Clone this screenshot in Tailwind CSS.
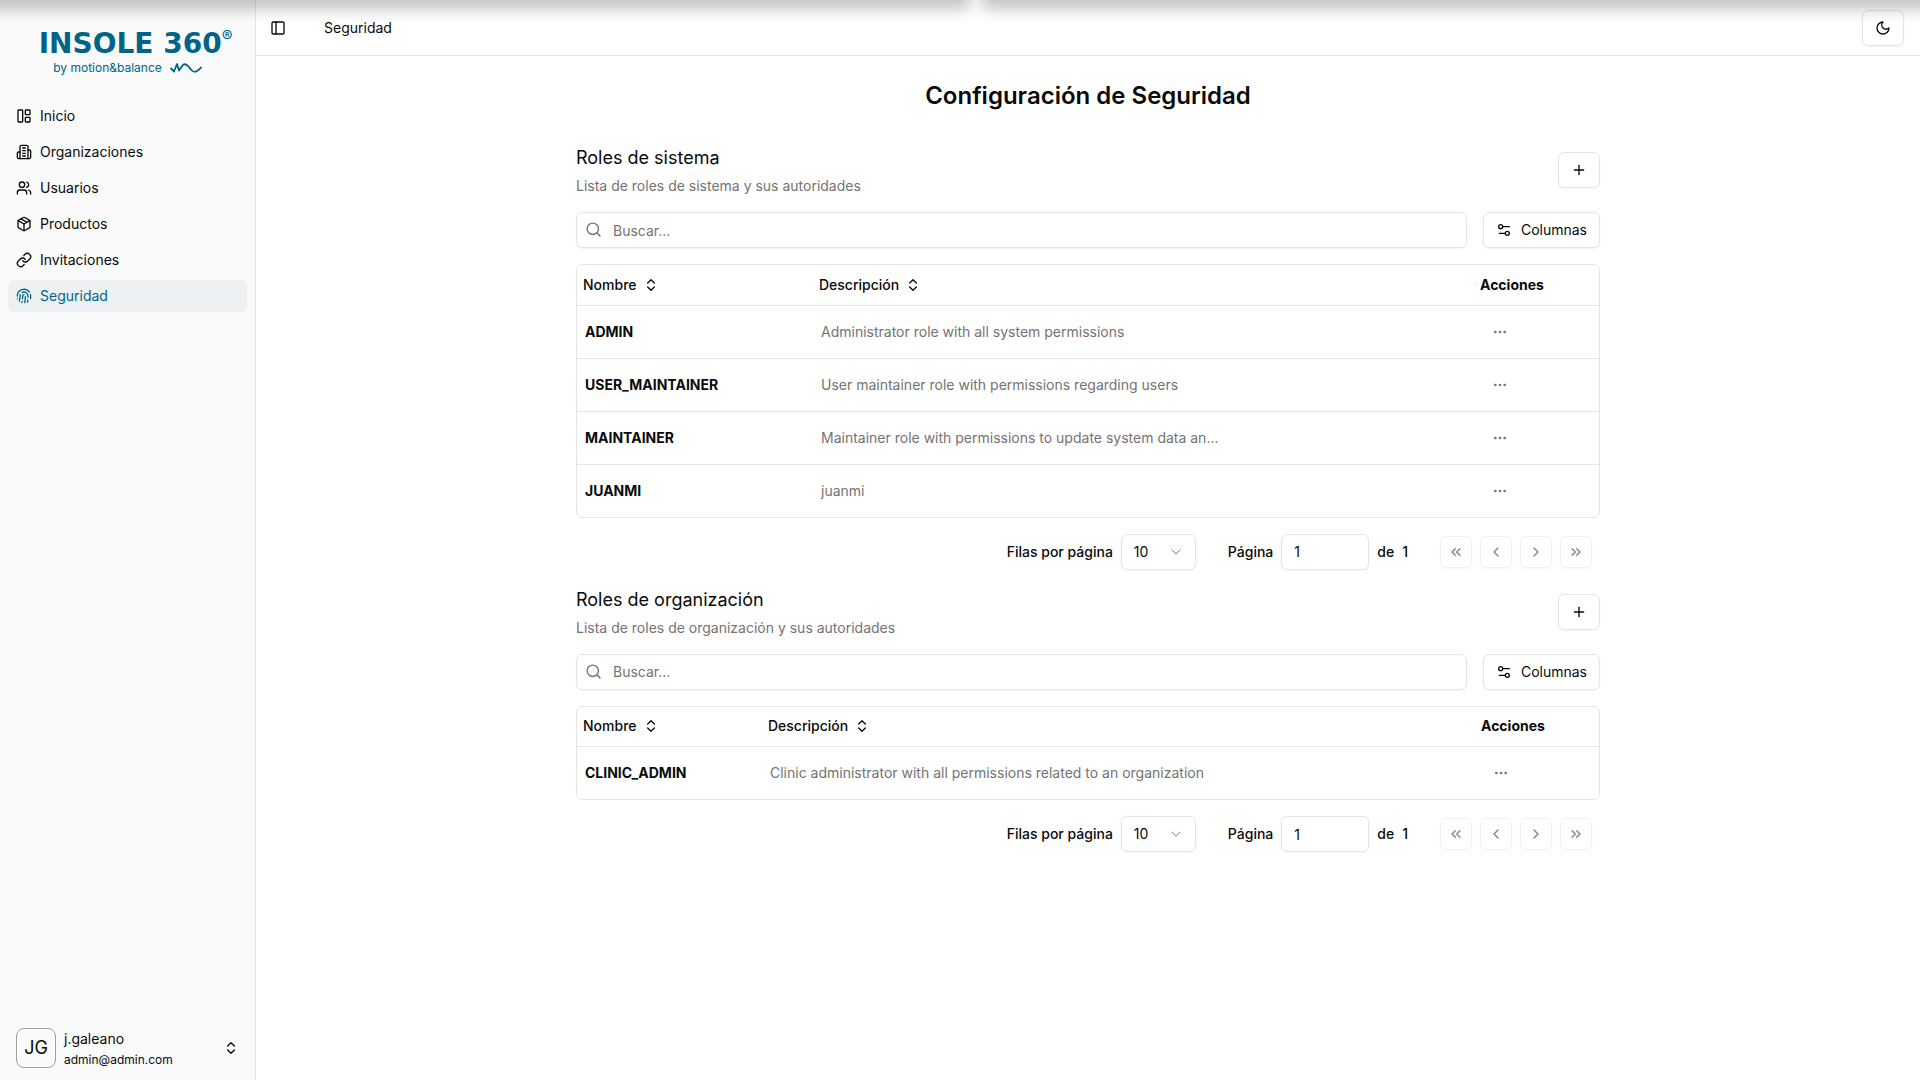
<!DOCTYPE html>
<html lang="es">
<head>
<meta charset="utf-8">
<meta name="viewport" content="width=device-width, initial-scale=1">
<title>Seguridad</title>
<script src="https://cdn.jsdelivr.net/npm/@tailwindcss/browser@4"></script>
</head>
<body class="flex min-h-screen bg-white font-['Inter',sans-serif] text-sm text-neutral-950">

<!-- Icon set -->
<svg class="hidden" aria-hidden="true">
  <symbol id="i-sort" viewBox="0 0 24 24"><path d="m7 15 5 5 5-5"/><path d="m7 9 5-5 5 5"/></symbol>
  <symbol id="i-plus" viewBox="0 0 24 24"><path d="M5 12h14"/><path d="M12 5v14"/></symbol>
  <symbol id="i-search" viewBox="0 0 24 24"><circle cx="11" cy="11" r="8"/><path d="m21 21-4.3-4.3"/></symbol>
  <symbol id="i-settings" viewBox="0 0 24 24"><path d="M20 7h-9"/><path d="M14 17H5"/><circle cx="17" cy="17" r="3"/><circle cx="7" cy="7" r="3"/></symbol>
  <symbol id="i-dots" viewBox="0 0 24 24"><circle cx="12" cy="12" r="1"/><circle cx="19" cy="12" r="1"/><circle cx="5" cy="12" r="1"/></symbol>
  <symbol id="i-down" viewBox="0 0 24 24"><path d="m6 9 6 6 6-6"/></symbol>
  <symbol id="i-left" viewBox="0 0 24 24"><path d="m15 18-6-6 6-6"/></symbol>
  <symbol id="i-right" viewBox="0 0 24 24"><path d="m9 18 6-6-6-6"/></symbol>
  <symbol id="i-first" viewBox="0 0 24 24"><path d="m11 17-5-5 5-5"/><path d="m18 17-5-5 5-5"/></symbol>
  <symbol id="i-last" viewBox="0 0 24 24"><path d="m6 17 5-5-5-5"/><path d="m13 17 5-5-5-5"/></symbol>
</svg>

<!-- Shadow along the top edge -->
<div class="pointer-events-none fixed inset-x-0 top-0 z-10 h-10 overflow-hidden">
  <div class="-mx-8 -mt-6 flex h-[34px] gap-3 blur-[7px]">
    <div class="w-[50.5%] bg-black/22"></div>
    <div class="flex-1 bg-black/22"></div>
  </div>
</div>

<aside class="sticky top-0 flex h-screen w-64 shrink-0 flex-col border-r border-neutral-200 bg-neutral-50">
  <div class="flex h-[92px] flex-col items-center pt-7 text-[#006487]">
    <div class="flex items-start pl-4 leading-8">
      <span class="font-['DejaVu_Sans',sans-serif] text-[28px] leading-8 font-bold">INSOLE 360</span>
      <span class="text-base leading-4">®</span>
    </div>
    <div class="flex items-center gap-2 text-xs leading-4">
      <span>by motion&amp;balance</span>
      <svg class="h-3 w-8" viewBox="0 0 32 12" fill="none" stroke="currentColor" stroke-width="1.8" stroke-linecap="round" stroke-linejoin="round"><path d="M1 6.500 4 9.500 7 2l2 6.500L12 4C14 1.500 16 1.500 19 5c3 4.500 5 6 8 4 2-1.300 3-2.200 4-3.500"/></svg>
    </div>
  </div>
  <nav class="mt-2 flex flex-col gap-1 px-2">
    <a href="#" class="flex h-8 items-center gap-2 rounded-md px-2">
      <svg class="size-4" viewBox="0 0 24 24" fill="none" stroke="currentColor" stroke-width="2" stroke-linecap="round" stroke-linejoin="round"><rect width="7" height="18" x="3" y="3" rx="1"/><rect width="7" height="7" x="14" y="3" rx="1"/><rect width="7" height="7" x="14" y="14" rx="1"/></svg>
      Inicio</a>
    <a href="#" class="flex h-8 items-center gap-2 rounded-md px-2">
      <svg class="size-4" viewBox="0 0 24 24" fill="none" stroke="currentColor" stroke-width="2" stroke-linecap="round" stroke-linejoin="round"><path d="M6 22V4a2 2 0 0 1 2-2h8a2 2 0 0 1 2 2v18Z"/><path d="M6 12H4a2 2 0 0 0-2 2v6a2 2 0 0 0 2 2h2"/><path d="M18 9h2a2 2 0 0 1 2 2v9a2 2 0 0 1-2 2h-2"/><path d="M10 6h4"/><path d="M10 10h4"/><path d="M10 14h4"/><path d="M10 18h4"/></svg>
      Organizaciones</a>
    <a href="#" class="flex h-8 items-center gap-2 rounded-md px-2">
      <svg class="size-4" viewBox="0 0 24 24" fill="none" stroke="currentColor" stroke-width="2" stroke-linecap="round" stroke-linejoin="round"><path d="M16 21v-2a4 4 0 0 0-4-4H6a4 4 0 0 0-4 4v2"/><circle cx="9" cy="7" r="4"/><path d="M22 21v-2a4 4 0 0 0-3-3.87"/><path d="M16 3.130a4 4 0 0 1 0 7.750"/></svg>
      Usuarios</a>
    <a href="#" class="flex h-8 items-center gap-2 rounded-md px-2">
      <svg class="size-4" viewBox="0 0 24 24" fill="none" stroke="currentColor" stroke-width="2" stroke-linecap="round" stroke-linejoin="round"><path d="M11 21.730a2 2 0 0 0 2 0l7-4A2 2 0 0 0 21 16V8a2 2 0 0 0-1-1.730l-7-4a2 2 0 0 0-2 0l-7 4A2 2 0 0 0 3 8v8a2 2 0 0 0 1 1.730z"/><path d="M12 22V12"/><path d="m3.300 7 8.700 5 8.700-5"/><path d="m7.500 4.270 9 5.150"/></svg>
      Productos</a>
    <a href="#" class="flex h-8 items-center gap-2 rounded-md px-2">
      <svg class="size-4" viewBox="0 0 24 24" fill="none" stroke="currentColor" stroke-width="2" stroke-linecap="round" stroke-linejoin="round"><path d="M10 13a5 5 0 0 0 7.540.540l3-3a5 5 0 0 0-7.070-7.070l-1.720 1.710"/><path d="M14 11a5 5 0 0 0-7.540-.540l-3 3a5 5 0 0 0 7.070 7.070l1.710-1.710"/></svg>
      Invitaciones</a>
    <a href="#" aria-current="page" class="flex h-8 items-center gap-2 rounded-md bg-[#edf1f4] px-2 text-[#006487]">
      <svg class="size-4" viewBox="0 0 24 24" fill="none" stroke="currentColor" stroke-width="2" stroke-linecap="round" stroke-linejoin="round"><path d="M12 10a2 2 0 0 0-2 2c0 1.020-.1 2.510-.260 4"/><path d="M14 13.120c0 2.380 0 6.380-1 8.880"/><path d="M17.290 21.020c.120-.6.430-2.300.5-3.020"/><path d="M2 12a10 10 0 0 1 18-6"/><path d="M2 16h.01"/><path d="M21.800 16c.2-2 .131-5.354 0-6"/><path d="M5 19.500C5.500 18 6 15 6 12a6 6 0 0 1 .340-2"/><path d="M8.650 22c.210-.660.450-1.320.570-2"/><path d="M9 6.800a6 6 0 0 1 9 5.200v2"/></svg>
      Seguridad</a>
  </nav>
  <button type="button" class="mt-auto mb-2 flex h-12 items-center gap-2 px-4 text-left">
    <span class="flex size-10 items-center justify-center rounded-lg border border-neutral-400 text-lg">JG</span>
    <span class="flex flex-1 flex-col gap-[3px]">
      <span class="leading-5">j.galeano</span>
      <span class="text-xs leading-4">admin@admin.com</span>
    </span>
    <svg class="size-4" fill="none" stroke="currentColor" stroke-width="2" stroke-linecap="round" stroke-linejoin="round"><use href="#i-sort"/></svg>
  </button>
</aside>

<div class="flex min-w-0 flex-1 flex-col">
  <header class="flex h-14 items-center border-b border-neutral-200 px-4">
    <button type="button" aria-label="Alternar barra lateral" class="-ml-2 flex size-7 items-center justify-center">
      <svg class="size-4" viewBox="0 0 24 24" fill="none" stroke="currentColor" stroke-width="2" stroke-linecap="round" stroke-linejoin="round"><rect width="18" height="18" x="3" y="3" rx="2"/><path d="M9 3v18"/></svg>
    </button>
    <span class="ml-8 flex-1">Seguridad</span>
    <button type="button" aria-label="Cambiar tema" class="flex h-9 items-center rounded-md border border-neutral-200 bg-white px-3 shadow-xs">
      <svg class="size-4" viewBox="0 0 24 24" fill="none" stroke="currentColor" stroke-width="2" stroke-linecap="round" stroke-linejoin="round"><path d="M12 3a6 6 0 0 0 9 9 9 9 0 1 1-9-9Z"/></svg>
    </button>
  </header>

  <main class="mx-auto flex w-full max-w-5xl flex-col gap-6 pt-6">
    <h1 class="mb-4 text-center text-2xl leading-8 font-semibold">Configuración de Seguridad</h1>

    <section class="flex flex-col gap-4">
      <div class="flex h-11 items-start justify-between">
        <div class="-mt-2 flex flex-col gap-1">
          <h2 class="text-lg leading-7">Roles de sistema</h2>
          <p class="leading-5 text-neutral-500">Lista de roles de sistema y sus autoridades</p>
        </div>
        <button type="button" aria-label="Añadir rol de sistema" class="flex h-9 items-center rounded-md border border-neutral-200 px-3 shadow-xs"><svg class="size-4" fill="none" stroke="currentColor" stroke-width="2" stroke-linecap="round" stroke-linejoin="round"><use href="#i-plus"/></svg></button>
      </div>
      <div class="flex gap-4">
        <div class="relative flex-1">
          <svg class="absolute top-[9px] left-[9px] size-[17px] text-neutral-500" fill="none" stroke="currentColor" stroke-width="2" stroke-linecap="round" stroke-linejoin="round"><use href="#i-search"/></svg>
          <input type="text" aria-label="Buscar roles de sistema" placeholder="Buscar..." class="h-9 w-full rounded-md border border-neutral-200 pr-3 pl-9 shadow-xs placeholder:text-neutral-500">
        </div>
        <button type="button" class="flex h-9 items-center gap-[9px] rounded-md border border-neutral-200 px-3 shadow-xs"><svg class="size-4" fill="none" stroke="currentColor" stroke-width="2" stroke-linecap="round" stroke-linejoin="round"><use href="#i-settings"/></svg>Columnas</button>
      </div>
      <div class="rounded-md border border-neutral-200">
        <table class="w-full table-fixed text-left">
          <colgroup><col class="w-[236px]"><col><col class="w-[127px]"></colgroup>
          <thead>
            <tr class="border-b border-neutral-200">
              <th scope="col" class="h-10 px-1.5 font-medium"><button type="button" class="flex items-center gap-1.5">Nombre<svg class="size-4" fill="none" stroke="currentColor" stroke-width="2" stroke-linecap="round" stroke-linejoin="round"><use href="#i-sort"/></svg></button></th>
              <th scope="col" class="px-1.5 font-medium"><button type="button" class="flex items-center gap-1.5">Descripción<svg class="size-4" fill="none" stroke="currentColor" stroke-width="2" stroke-linecap="round" stroke-linejoin="round"><use href="#i-sort"/></svg></button></th>
              <th scope="col" class="px-2 font-bold">Acciones</th>
            </tr>
          </thead>
          <tbody>
            <tr class="border-b border-neutral-200">
              <td class="p-2 font-bold">ADMIN</td>
              <td class="p-2 text-neutral-500">Administrator role with all system permissions</td>
              <td class="p-2"><button type="button" aria-label="Acciones de ADMIN" class="flex h-9 items-center px-3 text-neutral-500"><svg class="size-4" fill="none" stroke="currentColor" stroke-width="2"><use href="#i-dots"/></svg></button></td>
            </tr>
            <tr class="border-b border-neutral-200">
              <td class="p-2 font-bold">USER_MAINTAINER</td>
              <td class="p-2 text-neutral-500">User maintainer role with permissions regarding users</td>
              <td class="p-2"><button type="button" aria-label="Acciones de USER_MAINTAINER" class="flex h-9 items-center px-3 text-neutral-500"><svg class="size-4" fill="none" stroke="currentColor" stroke-width="2"><use href="#i-dots"/></svg></button></td>
            </tr>
            <tr class="border-b border-neutral-200">
              <td class="p-2 font-bold">MAINTAINER</td>
              <td class="p-2 text-neutral-500">Maintainer role with permissions to update system data an...</td>
              <td class="p-2"><button type="button" aria-label="Acciones de MAINTAINER" class="flex h-9 items-center px-3 text-neutral-500"><svg class="size-4" fill="none" stroke="currentColor" stroke-width="2"><use href="#i-dots"/></svg></button></td>
            </tr>
            <tr>
              <td class="p-2 font-bold">JUANMI</td>
              <td class="p-2 text-neutral-500">juanmi</td>
              <td class="p-2"><button type="button" aria-label="Acciones de JUANMI" class="flex h-9 items-center px-3 text-neutral-500"><svg class="size-4" fill="none" stroke="currentColor" stroke-width="2"><use href="#i-dots"/></svg></button></td>
            </tr>
          </tbody>
        </table>
      </div>
      <div class="flex items-center justify-end gap-8 px-2 font-medium">
        <div class="flex items-center gap-2">
          <label for="rows-system">Filas por página</label>
          <div class="relative">
            <select id="rows-system" class="h-9 w-[75px] appearance-none rounded-md border border-neutral-200 px-3 font-normal shadow-xs"><option>10</option></select>
            <svg class="pointer-events-none absolute top-2.5 right-3 size-4 opacity-50" fill="none" stroke="currentColor" stroke-width="1.500" stroke-linecap="round" stroke-linejoin="round"><use href="#i-down"/></svg>
          </div>
        </div>
        <div class="flex items-center gap-2">
          <label for="page-system">Página</label>
          <input id="page-system" type="text" value="1" class="h-9 w-[88px] rounded-md border border-neutral-200 px-3 font-normal shadow-xs">
          <span>de</span><span>1</span>
        </div>
        <div class="flex items-center gap-2">
          <button type="button" disabled aria-label="Primera página" class="flex size-8 items-center justify-center rounded-md border border-neutral-200 opacity-50 shadow-xs"><svg class="size-4" fill="none" stroke="currentColor" stroke-width="2" stroke-linecap="round" stroke-linejoin="round"><use href="#i-first"/></svg></button>
          <button type="button" disabled aria-label="Página anterior" class="flex size-8 items-center justify-center rounded-md border border-neutral-200 opacity-50 shadow-xs"><svg class="size-4" fill="none" stroke="currentColor" stroke-width="2" stroke-linecap="round" stroke-linejoin="round"><use href="#i-left"/></svg></button>
          <button type="button" disabled aria-label="Página siguiente" class="flex size-8 items-center justify-center rounded-md border border-neutral-200 opacity-50 shadow-xs"><svg class="size-4" fill="none" stroke="currentColor" stroke-width="2" stroke-linecap="round" stroke-linejoin="round"><use href="#i-right"/></svg></button>
          <button type="button" disabled aria-label="Última página" class="flex size-8 items-center justify-center rounded-md border border-neutral-200 opacity-50 shadow-xs"><svg class="size-4" fill="none" stroke="currentColor" stroke-width="2" stroke-linecap="round" stroke-linejoin="round"><use href="#i-last"/></svg></button>
        </div>
      </div>
    </section>

    <section class="flex flex-col gap-4">
      <div class="flex h-11 items-start justify-between">
        <div class="-mt-2 flex flex-col gap-1">
          <h2 class="text-lg leading-7">Roles de organización</h2>
          <p class="leading-5 text-neutral-500">Lista de roles de organización y sus autoridades</p>
        </div>
        <button type="button" aria-label="Añadir rol de organización" class="flex h-9 items-center rounded-md border border-neutral-200 px-3 shadow-xs"><svg class="size-4" fill="none" stroke="currentColor" stroke-width="2" stroke-linecap="round" stroke-linejoin="round"><use href="#i-plus"/></svg></button>
      </div>
      <div class="flex gap-4">
        <div class="relative flex-1">
          <svg class="absolute top-[9px] left-[9px] size-[17px] text-neutral-500" fill="none" stroke="currentColor" stroke-width="2" stroke-linecap="round" stroke-linejoin="round"><use href="#i-search"/></svg>
          <input type="text" aria-label="Buscar roles de organización" placeholder="Buscar..." class="h-9 w-full rounded-md border border-neutral-200 pr-3 pl-9 shadow-xs placeholder:text-neutral-500">
        </div>
        <button type="button" class="flex h-9 items-center gap-[9px] rounded-md border border-neutral-200 px-3 shadow-xs"><svg class="size-4" fill="none" stroke="currentColor" stroke-width="2" stroke-linecap="round" stroke-linejoin="round"><use href="#i-settings"/></svg>Columnas</button>
      </div>
      <div class="rounded-md border border-neutral-200">
        <table class="w-full table-fixed text-left">
          <colgroup><col class="w-[185px]"><col><col class="w-[126px]"></colgroup>
          <thead>
            <tr class="border-b border-neutral-200">
              <th scope="col" class="h-10 px-1.5 font-medium"><button type="button" class="flex items-center gap-1.5">Nombre<svg class="size-4" fill="none" stroke="currentColor" stroke-width="2" stroke-linecap="round" stroke-linejoin="round"><use href="#i-sort"/></svg></button></th>
              <th scope="col" class="px-1.5 font-medium"><button type="button" class="flex items-center gap-1.5">Descripción<svg class="size-4" fill="none" stroke="currentColor" stroke-width="2" stroke-linecap="round" stroke-linejoin="round"><use href="#i-sort"/></svg></button></th>
              <th scope="col" class="px-2 font-bold">Acciones</th>
            </tr>
          </thead>
          <tbody>
            <tr>
              <td class="p-2 font-bold">CLINIC_ADMIN</td>
              <td class="p-2 text-neutral-500">Clinic administrator with all permissions related to an organization</td>
              <td class="p-2"><button type="button" aria-label="Acciones de CLINIC_ADMIN" class="flex h-9 items-center px-3 text-neutral-500"><svg class="size-4" fill="none" stroke="currentColor" stroke-width="2"><use href="#i-dots"/></svg></button></td>
            </tr>
          </tbody>
        </table>
      </div>
      <div class="flex items-center justify-end gap-8 px-2 font-medium">
        <div class="flex items-center gap-2">
          <label for="rows-org">Filas por página</label>
          <div class="relative">
            <select id="rows-org" class="h-9 w-[75px] appearance-none rounded-md border border-neutral-200 px-3 font-normal shadow-xs"><option>10</option></select>
            <svg class="pointer-events-none absolute top-2.5 right-3 size-4 opacity-50" fill="none" stroke="currentColor" stroke-width="1.500" stroke-linecap="round" stroke-linejoin="round"><use href="#i-down"/></svg>
          </div>
        </div>
        <div class="flex items-center gap-2">
          <label for="page-org">Página</label>
          <input id="page-org" type="text" value="1" class="h-9 w-[88px] rounded-md border border-neutral-200 px-3 font-normal shadow-xs">
          <span>de</span><span>1</span>
        </div>
        <div class="flex items-center gap-2">
          <button type="button" disabled aria-label="Primera página" class="flex size-8 items-center justify-center rounded-md border border-neutral-200 opacity-50 shadow-xs"><svg class="size-4" fill="none" stroke="currentColor" stroke-width="2" stroke-linecap="round" stroke-linejoin="round"><use href="#i-first"/></svg></button>
          <button type="button" disabled aria-label="Página anterior" class="flex size-8 items-center justify-center rounded-md border border-neutral-200 opacity-50 shadow-xs"><svg class="size-4" fill="none" stroke="currentColor" stroke-width="2" stroke-linecap="round" stroke-linejoin="round"><use href="#i-left"/></svg></button>
          <button type="button" disabled aria-label="Página siguiente" class="flex size-8 items-center justify-center rounded-md border border-neutral-200 opacity-50 shadow-xs"><svg class="size-4" fill="none" stroke="currentColor" stroke-width="2" stroke-linecap="round" stroke-linejoin="round"><use href="#i-right"/></svg></button>
          <button type="button" disabled aria-label="Última página" class="flex size-8 items-center justify-center rounded-md border border-neutral-200 opacity-50 shadow-xs"><svg class="size-4" fill="none" stroke="currentColor" stroke-width="2" stroke-linecap="round" stroke-linejoin="round"><use href="#i-last"/></svg></button>
        </div>
      </div>
    </section>
  </main>
</div>
</body>
</html>
